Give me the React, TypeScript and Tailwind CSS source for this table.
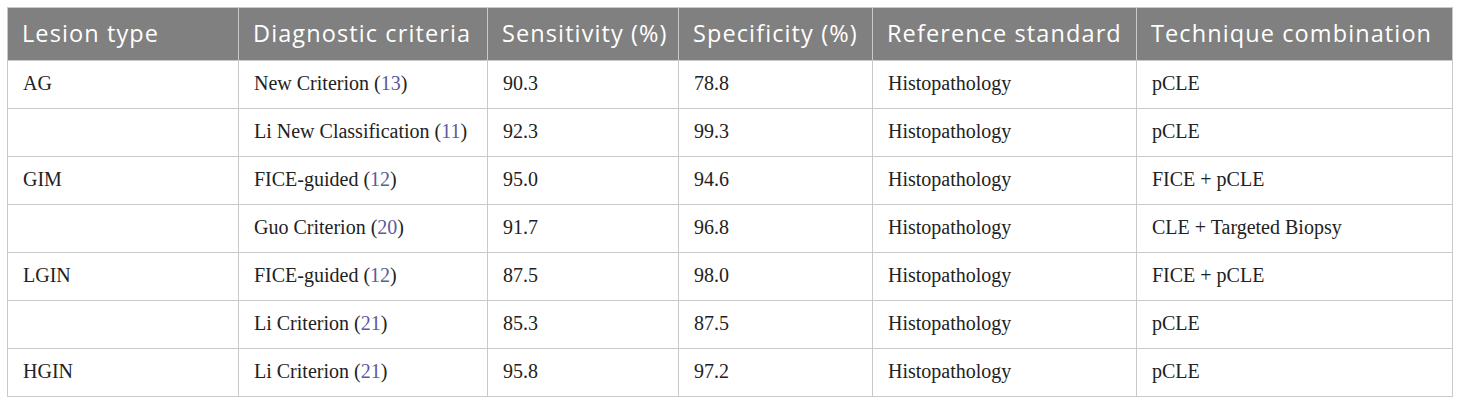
import React from "react";

type Row = { lesion: string; crit: string; ref: string; sens: string; spec: string; std: string; tech: string };

const rows: Row[] = [
  { lesion: "AG", crit: "New Criterion", ref: "13", sens: "90.3", spec: "78.8", std: "Histopathology", tech: "pCLE" },
  { lesion: "", crit: "Li New Classification", ref: "11", sens: "92.3", spec: "99.3", std: "Histopathology", tech: "pCLE" },
  { lesion: "GIM", crit: "FICE-guided", ref: "12", sens: "95.0", spec: "94.6", std: "Histopathology", tech: "FICE + pCLE" },
  { lesion: "", crit: "Guo Criterion", ref: "20", sens: "91.7", spec: "96.8", std: "Histopathology", tech: "CLE + Targeted Biopsy" },
  { lesion: "LGIN", crit: "FICE-guided", ref: "12", sens: "87.5", spec: "98.0", std: "Histopathology", tech: "FICE + pCLE" },
  { lesion: "", crit: "Li Criterion", ref: "21", sens: "85.3", spec: "87.5", std: "Histopathology", tech: "pCLE" },
  { lesion: "HGIN", crit: "Li Criterion", ref: "21", sens: "95.8", spec: "97.2", std: "Histopathology", tech: "pCLE" },
];

const headers = [
  "Lesion type",
  "Diagnostic criteria",
  "Sensitivity (%)",
  "Specificity (%)",
  "Reference standard",
  "Technique combination",
];
const widths = ["w-[231px]", "w-[249px]", "w-[191px]", "w-[194px]", "w-[264px]", "w-[316px]"];

export default function App() {
  const td = "border border-[#c9c9c9] px-[15px] pb-[3px] h-[48px] align-middle";
  return (
    <div className="bg-white w-[1460px] h-[405px] pt-[7px] pl-[7px]">
      <table className="border-collapse table-fixed w-[1445px] text-[#222]">
        <colgroup>
          {widths.map((w, i) => (
            <col key={i} className={w} />
          ))}
        </colgroup>
        <thead>
          <tr className="bg-[#808080]">
            {headers.map((h) => (
              <th
                key={h}
                className="border border-[#c9c9c9] px-[14px] h-[53px] text-left font-normal text-white text-[23.5px] tracking-[1.1px] whitespace-nowrap"
                style={{ fontFamily: '"Open Sans", sans-serif' }}
              >
                {h}
              </th>
            ))}
          </tr>
        </thead>
        <tbody className="text-[20px]" style={{ fontFamily: '"Liberation Serif", serif' }}>
          {rows.map((r, i) => (
            <tr key={i}>
              <td className={td}>{r.lesion}</td>
              <td className={td}>
                {r.crit} (<span className="text-[#5b5b9c]">{r.ref}</span>)
              </td>
              <td className={td}>{r.sens}</td>
              <td className={td}>{r.spec}</td>
              <td className={td}>{r.std}</td>
              <td className={td}>{r.tech}</td>
            </tr>
          ))}
        </tbody>
      </table>
    </div>
  );
}
